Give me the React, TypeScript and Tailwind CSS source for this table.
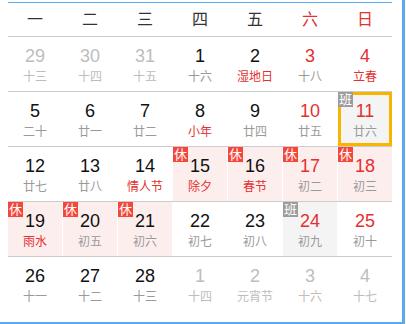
import React from "react"

type Day = {
  n: number
  lunar: string
  muted?: boolean
  redNum?: boolean
  redLunar?: boolean
  tag?: "休" | "班"
  holiday?: boolean
  selected?: boolean
}

const weekdays = ["一", "二", "三", "四", "五", "六", "日"]

const rows: Day[][] = [
  [
    { n: 29, lunar: "十三", muted: true },
    { n: 30, lunar: "十四", muted: true },
    { n: 31, lunar: "十五", muted: true },
    { n: 1, lunar: "十六" },
    { n: 2, lunar: "湿地日", redLunar: true },
    { n: 3, lunar: "十八", redNum: true },
    { n: 4, lunar: "立春", redNum: true, redLunar: true },
  ],
  [
    { n: 5, lunar: "二十" },
    { n: 6, lunar: "廿一" },
    { n: 7, lunar: "廿二" },
    { n: 8, lunar: "小年", redLunar: true },
    { n: 9, lunar: "廿四" },
    { n: 10, lunar: "廿五", redNum: true },
    { n: 11, lunar: "廿六", redNum: true, tag: "班", selected: true },
  ],
  [
    { n: 12, lunar: "廿七" },
    { n: 13, lunar: "廿八" },
    { n: 14, lunar: "情人节", redLunar: true },
    { n: 15, lunar: "除夕", redLunar: true, tag: "休", holiday: true },
    { n: 16, lunar: "春节", redLunar: true, tag: "休", holiday: true },
    { n: 17, lunar: "初二", redNum: true, tag: "休", holiday: true },
    { n: 18, lunar: "初三", redNum: true, tag: "休", holiday: true },
  ],
  [
    { n: 19, lunar: "雨水", redLunar: true, tag: "休", holiday: true },
    { n: 20, lunar: "初五", tag: "休", holiday: true },
    { n: 21, lunar: "初六", tag: "休", holiday: true },
    { n: 22, lunar: "初七" },
    { n: 23, lunar: "初八" },
    { n: 24, lunar: "初九", redNum: true, tag: "班" },
    { n: 25, lunar: "初十", redNum: true },
  ],
  [
    { n: 26, lunar: "十一" },
    { n: 27, lunar: "十二" },
    { n: 28, lunar: "十三" },
    { n: 1, lunar: "十四", muted: true },
    { n: 2, lunar: "元宵节", muted: true },
    { n: 3, lunar: "十六", muted: true },
    { n: 4, lunar: "十七", muted: true },
  ],
]

function Cell({ d }: { d: Day }) {
  const bg = d.holiday ? "bg-[#fdeeee]" : d.tag === "班" ? "bg-[#f4f4f4]" : "bg-white"
  const numColor = d.muted ? "text-[#bdbdbd]" : d.redNum || d.redLunar && d.n === 4 ? "text-[#e4302f]" : "text-[#111]"
  const lunarColor = d.muted ? "text-[#bdbdbd]" : d.redLunar ? "text-[#e4302f]" : "text-[#9a9a9a]"
  return (
    <div className={`relative h-[54px] flex flex-col items-center pt-[8px] ${bg}`}>
      {d.selected && <div className="absolute inset-0 border-[3px] border-[#f7b500]" />}
      {d.tag && (
        <span
          className={`absolute left-0 top-0 w-[15px] h-[15px] flex items-center justify-center text-[13px] leading-none text-white ${d.tag === "休" ? "bg-[#f4473c]" : "bg-[#9c9c9c]"}`}
        >
          {d.tag}
        </span>
      )}
      <span className={`relative text-[18px] leading-[22px] ${numColor}`}>{d.n}</span>
      <span className={`relative mt-[2px] text-[12px] leading-[16px] ${lunarColor}`}>{d.lunar}</span>
    </div>
  )
}

export default function App() {
  return (
    <div className="w-[406px] h-[324px] bg-white font-['Liberation_Sans','Noto_Sans_CJK_SC',sans-serif]">
      <div className="w-[405px] h-[324px] border-r-[3px] border-b-2 border-[#5aaaf2] pl-[8px] pt-[2px]">
        <div className="w-[384px] border-t border-[#5aaaf2]">
          <div className="grid grid-cols-7 gap-x-px h-[34px] border-b border-[#cccccc]">
            {weekdays.map((w, i) => (
              <div
                key={w}
                className={`flex items-center justify-center text-[16px] ${i >= 5 ? "text-[#e4302f]" : "text-[#333]"}`}
              >
                {w}
              </div>
            ))}
          </div>
          {rows.map((row, ri) => (
            <div
              key={ri}
              className={`grid grid-cols-7 gap-x-px ${ri < rows.length - 1 ? "border-b border-[#cccccc]" : ""}`}
            >
              {row.map((d, ci) => (
                <Cell key={ci} d={d} />
              ))}
            </div>
          ))}
        </div>
      </div>
    </div>
  )
}
